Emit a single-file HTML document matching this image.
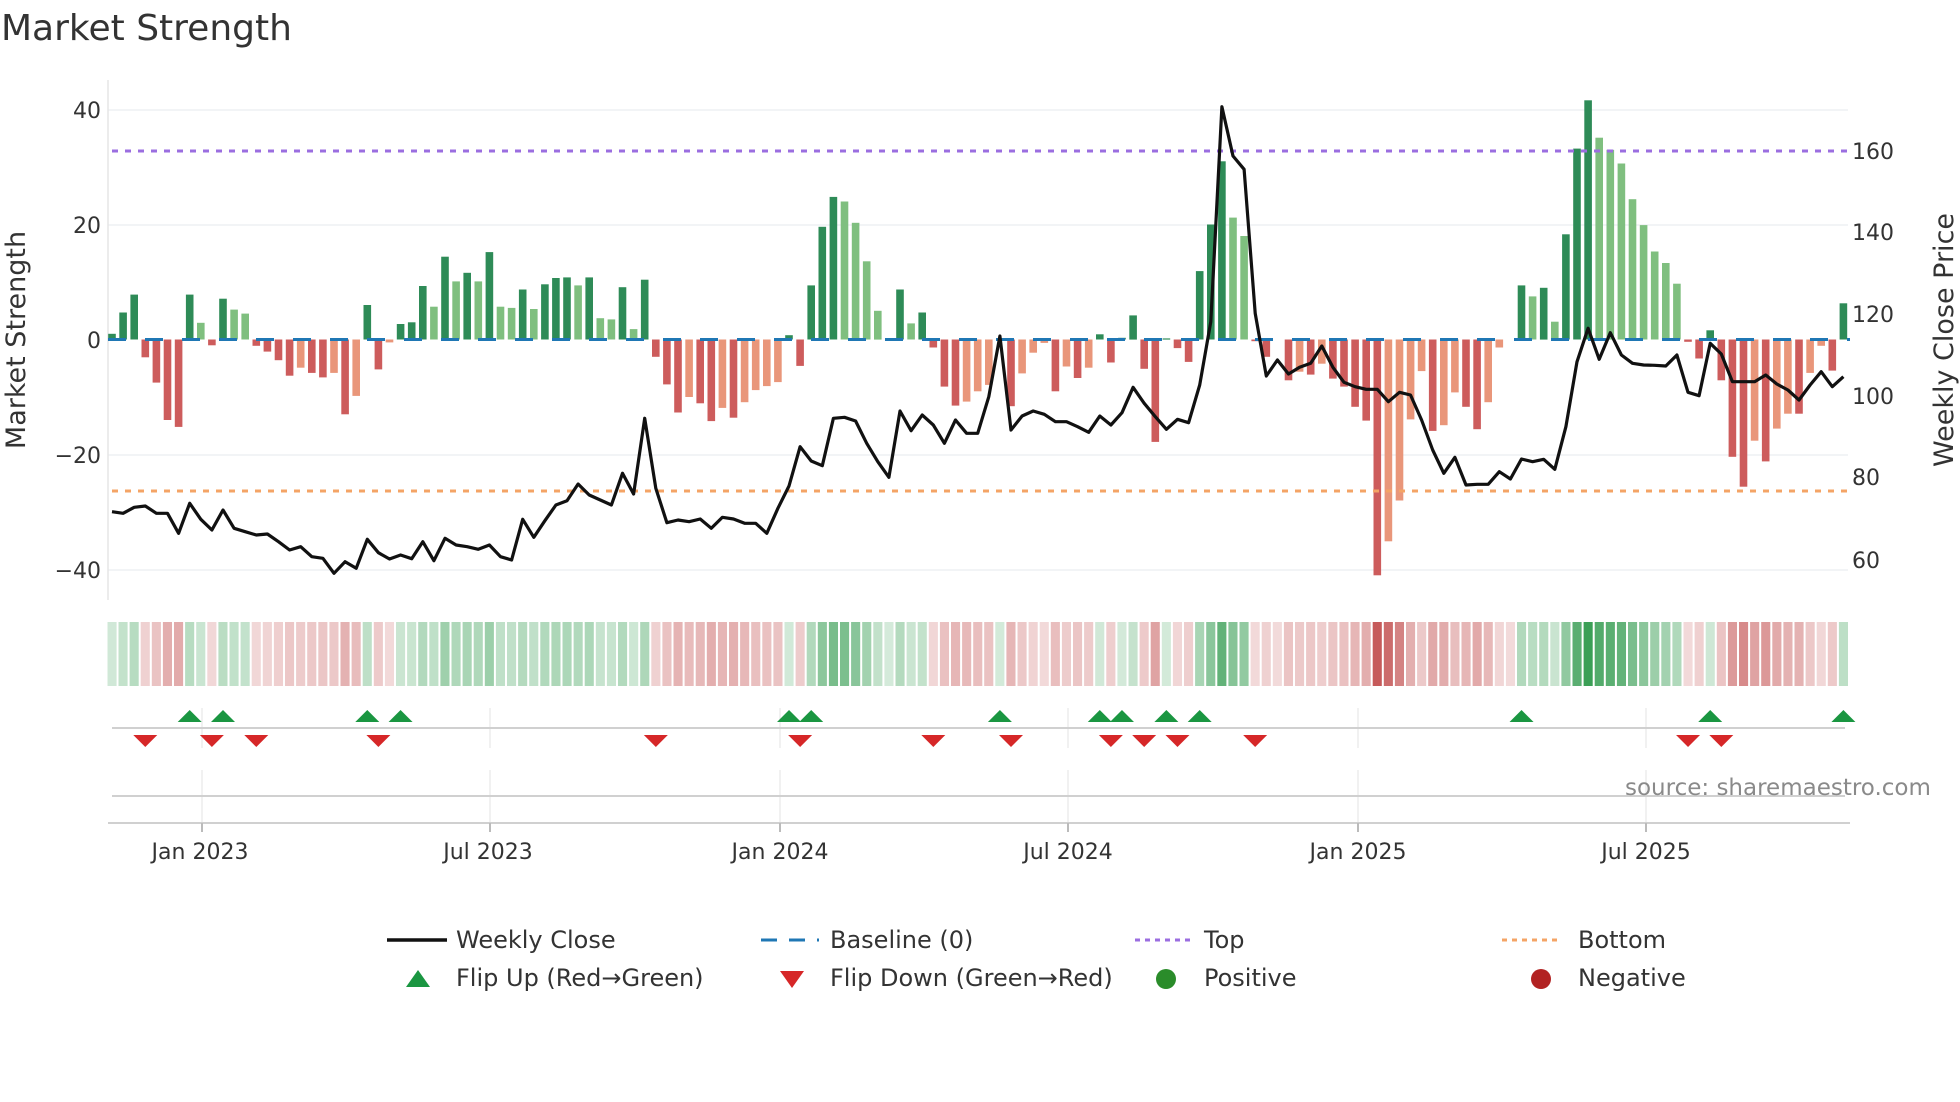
<!DOCTYPE html>
<html><head><meta charset="utf-8"><style>
html,body{margin:0;padding:0;background:#fff;}
svg{display:block;font-family:"DejaVu Sans","Liberation Sans",sans-serif;}
</style></head><body>
<svg id="s" width="1960" height="1102" viewBox="0 0 1960 1102" xmlns="http://www.w3.org/2000/svg">
<rect width="1960" height="1102" fill="#fff"/>
<text x="1" y="40" font-size="36" fill="#333">Market Strength</text>
<g stroke="#edf0f4" stroke-width="1.5">
<line x1="108" y1="110" x2="1848" y2="110"/><line x1="108" y1="225" x2="1848" y2="225"/>
<line x1="108" y1="455" x2="1848" y2="455"/><line x1="108" y1="570" x2="1848" y2="570"/>
</g>
<line x1="108" y1="80" x2="108" y2="600" stroke="#e6e6e6" stroke-width="1.5"/>
<g font-size="22" fill="#333" text-anchor="end">
<text x="101" y="118">40</text><text x="101" y="233">20</text><text x="101" y="348">0</text>
<text x="101" y="463">−20</text><text x="101" y="578">−40</text>
</g>
<g font-size="22" fill="#333">
<text x="1852" y="159">160</text><text x="1852" y="240">140</text><text x="1852" y="322">120</text>
<text x="1852" y="404">100</text><text x="1852" y="485">80</text><text x="1852" y="568">60</text>
</g>
<text transform="translate(25,340) rotate(-90)" font-size="27" fill="#333" text-anchor="middle">Market Strength</text>
<text transform="translate(1953,340) rotate(-90)" font-size="27" fill="#333" text-anchor="middle">Weekly Close Price</text>
<g id="bars"></g>
<line x1="108" y1="339.5" x2="1850" y2="339.5" stroke="#1f77b4" stroke-width="3" stroke-dasharray="18 19"/>
<line x1="112" y1="151" x2="1850" y2="151" stroke="#9b6ee0" stroke-width="3" stroke-dasharray="6 7"/>
<line x1="112" y1="491" x2="1850" y2="491" stroke="#f4a466" stroke-width="3" stroke-dasharray="6 7"/>
<polyline id="price" fill="none" stroke="#111" stroke-width="3.2" stroke-linejoin="round"/>
<g id="heat"></g>
<g stroke="#ececec" stroke-width="1.5">
<line x1="202" y1="708" x2="202" y2="748"/><line x1="490" y1="708" x2="490" y2="748"/><line x1="780" y1="708" x2="780" y2="748"/><line x1="1068" y1="708" x2="1068" y2="748"/><line x1="1358" y1="708" x2="1358" y2="748"/><line x1="1646" y1="708" x2="1646" y2="748"/>
<line x1="202" y1="770" x2="202" y2="823"/><line x1="490" y1="770" x2="490" y2="823"/><line x1="780" y1="770" x2="780" y2="823"/><line x1="1068" y1="770" x2="1068" y2="823"/><line x1="1358" y1="770" x2="1358" y2="823"/><line x1="1646" y1="770" x2="1646" y2="823"/>
</g>
<line x1="112" y1="728" x2="1845" y2="728" stroke="#d0d0d0" stroke-width="2"/>
<line x1="112" y1="796" x2="1845" y2="796" stroke="#d0d0d0" stroke-width="2"/>
<line x1="108" y1="823" x2="1850" y2="823" stroke="#d0d0d0" stroke-width="2"/>
<g stroke="#bbb" stroke-width="2">
<line x1="202" y1="823" x2="202" y2="832"/><line x1="490" y1="823" x2="490" y2="832"/><line x1="780" y1="823" x2="780" y2="832"/><line x1="1068" y1="823" x2="1068" y2="832"/><line x1="1358" y1="823" x2="1358" y2="832"/><line x1="1646" y1="823" x2="1646" y2="832"/>
</g>
<g id="marks"></g>
<g font-size="22" fill="#333" text-anchor="middle">
<text x="200" y="859">Jan 2023</text><text x="488" y="859">Jul 2023</text><text x="780" y="859">Jan 2024</text>
<text x="1068" y="859">Jul 2024</text><text x="1358" y="859">Jan 2025</text><text x="1646" y="859">Jul 2025</text>
</g>
<text x="1625" y="795" font-size="23" fill="#8a8a8a">source: sharemaestro.com</text>
<g font-size="24" fill="#333">
<line x1="387" y1="940" x2="447" y2="940" stroke="#111" stroke-width="3.5"/>
<text x="456" y="948">Weekly Close</text>
<line x1="761" y1="940" x2="819" y2="940" stroke="#1f77b4" stroke-width="3" stroke-dasharray="16 12"/>
<text x="830" y="948">Baseline (0)</text>
<line x1="1135" y1="940" x2="1192" y2="940" stroke="#9b6ee0" stroke-width="3" stroke-dasharray="5 5"/>
<text x="1204" y="948">Top</text>
<line x1="1502" y1="940" x2="1560" y2="940" stroke="#f4a466" stroke-width="3" stroke-dasharray="5 5"/>
<text x="1578" y="948">Bottom</text>
<polygon points="418,970 430,987 406,987" fill="#1a9641"/>
<text x="456" y="986">Flip Up (Red→Green)</text>
<polygon points="780,971 804,971 792,988" fill="#d62728"/>
<text x="830" y="986">Flip Down (Green→Red)</text>
<circle cx="1166" cy="979" r="10" fill="#2a8c2a"/>
<text x="1204" y="986">Positive</text>
<circle cx="1541" cy="979" r="10" fill="#b22222"/>
<text x="1578" y="986">Negative</text>
</g>
</svg>
<script>
var v=[1,4.7,7.8,-3.1,-7.5,-14,-15.2,7.8,2.9,-1,7.1,5.2,4.5,-1.1,-2.1,-3.6,-6.3,-4.9,-5.8,-6.6,-5.8,-13,-9.8,6,-5.2,-0.5,2.7,3,9.3,5.7,14.4,10.1,11.6,10.1,15.2,5.7,5.5,8.7,5.3,9.6,10.7,10.8,9.4,10.8,3.7,3.5,9.1,1.8,10.4,
-3,-7.8,-12.7,-10,-11.1,-14.2,-11.9,-13.6,-10.9,-8.8,-8.1,-7.4,0.75,-4.6,9.4,19.6,24.8,24,20.3,13.6,5,0,8.7,2.8,4.7,-1.4,-8.2,-11.5,-10.8,-9,-7.9,0.2,-11.6,-5.9,-2.3,-0.6,-9,-4.7,-6.7,-4.9,0.9,-4,0.3,4.2,-5.1,-17.8,0.2,-1.5,-3.9,11.9,20,31,21.2,18,-0.3,
-3,0,-7.1,-5.6,-6.1,-4.2,-6.8,-8.2,-11.7,-14.1,-41,-35.1,-28,-13.9,-5.5,-15.9,-14.9,-9.2,-11.7,-15.6,-10.9,-1.4,0,9.4,7.5,9,3.1,18.3,33.2,41.6,35.1,33,30.6,24.4,19.9,15.3,13.3,9.7,-0.4,-3.3,1.6,-7.1,-20.4,-25.6,-17.6,-21.2,-15.5,-12.9,-12.9,-5.8,-1.1,-5.4,6.3];
var p=[1295,1300,1282,1278,1300,1300,1360,1270,1318,1350,1290,1345,1355,1365,1362,1385,1410,1400,1430,1435,1480,1445,1465,1378,1418,1437,1425,1436,1385,1442,1375,1395,1400,1408,1395,1430,1440,1318,1372,1322,1275,1262,1212,1245,1260,1275,1180,1242,1015,
1225,1328,1320,1325,1317,1345,1312,1317,1330,1330,1360,1285,1218,1100,1143,1157,1015,1012,1023,1090,1145,1192,993,1052,1005,1035,1090,1020,1060,1060,950,768,1050,1008,993,1003,1025,1025,1040,1057,1008,1035,998,922,970,1010,1048,1018,1028,915,725,80,228,268,700,
888,840,882,862,850,798,862,907,920,928,928,965,937,945,1020,1110,1180,1132,1215,1213,1213,1175,1197,1137,1145,1138,1168,1040,845,745,838,758,825,850,855,856,858,825,937,947,790,822,905,905,905,885,912,930,960,915,875,920,890];
var NS="http://www.w3.org/2000/svg",x0=112,dx=(1843.4-112)/(v.length-1),Z=339.5,K=5.75;
function el(t,a,g){var e=document.createElementNS(NS,t);for(var k in a)e.setAttribute(k,a[k]);document.getElementById(g).appendChild(e);}
var prev=0,ps=1,pts=[];
for(var i=0;i<v.length;i++){
 var x=x0+i*dx,val=v[i];
 if(val!==0){
  var dark=!(prev!==0&&Math.sign(prev)===Math.sign(val)&&Math.abs(val)<Math.abs(prev));
  var c=val>0?(dark?"#2e8b57":"#7fbf7f"):(dark?"#cd5c5c":"#e9967a");
  var h=Math.abs(val)*K;
  el("rect",{x:(x-3.8).toFixed(1),y:(val>0?Z-h:Z).toFixed(1),width:7.6,height:h.toFixed(1),fill:c},"bars");
  var s=Math.sign(val);
  if(i>0&&s!==ps){
   if(s>0)el("polygon",{points:(x-12)+",722 "+x+",710 "+(x+12)+",722",fill:"#1a9641"},"marks");
   else el("polygon",{points:(x-12)+",735 "+(x+12)+",735 "+x+",747",fill:"#d62728"},"marks");
  }
  ps=s;
 }
 prev=val;
 var t=Math.min(Math.abs(val)/42,1),a=0.2+0.72*t,b=ps>0?[40,150,70]:[192,72,72];
 var col="rgb("+b.map(function(q){return Math.round(255*(1-a)+q*a);}).join(",")+")";
 el("rect",{x:(x-dx/2+1).toFixed(1),y:622,width:(dx-2).toFixed(1),height:64,fill:col},"heat");
 pts.push(x.toFixed(1)+","+(80+p[i]/3).toFixed(1));
}
document.getElementById("price").setAttribute("points",pts.join(" "));
</script>
</body></html>
